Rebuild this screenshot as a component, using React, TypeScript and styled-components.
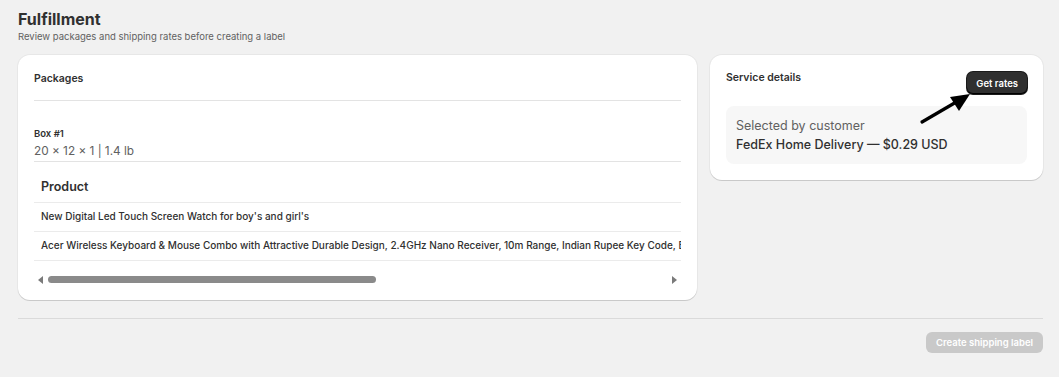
import styled, { createGlobalStyle } from "styled-components";

const GlobalStyle = createGlobalStyle`
  html, body {
    margin: 0;
    padding: 0;
    background: #f1f1f1;
    font-family: Inter, "Noto Sans", sans-serif;
    color: #303030;
  }
`;

const Page = styled.div`
  padding: 9px 16px 0 18px;
  width: 1059px;
  height: 377px;
  box-sizing: border-box;
`;

const Title = styled.h1`
  margin: 0;
  font-size: 16px;
  line-height: 20px;
  font-weight: 650;
  color: #303030;
`;

const Subtitle = styled.p`
  margin: 1px 0 0;
  font-size: 9.5px;
  line-height: 14px;
  color: #616161;
`;

const Layout = styled.div`
  display: grid;
  grid-template-columns: 679px 1fr;
  gap: 13px;
  align-items: start;
  margin-top: 11px;
`;

const Card = styled.section`
  position: relative;
  background: #fff;
  border-radius: 12px;
  box-shadow: 0 1px 0 rgba(0, 0, 0, 0.13), 0 0 0 1px rgba(0, 0, 0, 0.04);
  padding: 16px 16px 0;
`;

const CardHeading = styled.h2`
  margin: 0;
  font-size: 10.5px;
  line-height: 14px;
  font-weight: 600;
  color: #303030;
`;

const PackagesHeader = styled.div`
  padding-top: 1px;
  padding-bottom: 14px;
  border-bottom: 1px solid #e3e3e3;
`;

const BoxInfo = styled.div`
  padding-top: 26px;
  padding-bottom: 1px;
  border-bottom: 1px solid #e3e3e3;
`;

const BoxLabel = styled.div`
  margin-bottom: 2px;
  font-size: 9.5px;
  line-height: 13px;
  font-weight: 600;
  color: #303030;
`;

const BoxSize = styled.div`
  font-size: 11.8px;
  line-height: 18px;
  color: #616161;
`;

const TableScroller = styled.div`
  overflow: hidden;
`;

const Row = styled.div<{ $header?: boolean }>`
  display: flex;
  align-items: ${(p) => (p.$header ? "flex-start" : "center")};
  box-sizing: border-box;
  height: ${(p) => (p.$header ? "41px" : "29px")};
  padding: ${(p) => (p.$header ? "17px 0 0 7px" : "0 0 1px 7px")};
  border-bottom: 1px solid #ebebeb;
  white-space: nowrap;
  font-size: ${(p) => (p.$header ? "12.5px" : "10px")};
  line-height: 15px;
  font-weight: ${(p) => (p.$header ? 600 : 450)};
  color: #303030;
`;

const FakeScrollbar = styled.div`
  display: flex;
  align-items: center;
  gap: 5px;
  height: 39px;
  padding: 0 4px 2px 4px;
  box-sizing: border-box;
`;

const ScrollArrow = styled.span<{ $dir: "left" | "right" }>`
  width: 0;
  height: 0;
  border-top: 4px solid transparent;
  border-bottom: 4px solid transparent;
  ${(p) =>
    p.$dir === "left"
      ? "border-right: 5px solid #7a7a7a;"
      : "border-left: 5px solid #7a7a7a;"}
`;

const ScrollTrack = styled.div`
  flex: 1;
  display: flex;
`;

const ScrollThumb = styled.div`
  width: 328px;
  height: 7px;
  border-radius: 4px;
  background: #8a8a8a;
`;

const ServiceCard = styled(Card)`
  padding-bottom: 16px;
`;

const ServiceHeader = styled.div`
  display: flex;
  justify-content: space-between;
  align-items: flex-start;
`;

const DarkButton = styled.button`
  margin-top: 1px;
  height: 22px;
  padding: 0 9px;
  border: 0;
  border-radius: 6px;
  background: #303030;
  box-shadow: inset 0 -1px 0 #000, 0 0 0 1px #1a1a1a;
  color: #fff;
  font-family: inherit;
  font-size: 9.5px;
  font-weight: 600;
`;

const SelectedBox = styled.div`
  margin-top: 12px;
  background: #f7f7f7;
  border-radius: 8px;
  padding: 10px 10px 10px;
`;

const SelectedLabel = styled.div`
  font-size: 12.5px;
  line-height: 19px;
  color: #616161;
`;

const SelectedValue = styled.div`
  font-size: 12.5px;
  line-height: 19px;
  font-weight: 500;
  color: #303030;
`;

const ArrowMark = styled.svg`
  position: absolute;
  left: 208px;
  top: 34px;
`;

const Footer = styled.div`
  margin-top: 18px;
  border-top: 1px solid #dadada;
  display: flex;
  justify-content: flex-end;
  padding-top: 13px;
`;

const DisabledButton = styled.button`
  height: 21px;
  width: 117px;
  border: 0;
  border-radius: 6px;
  background: #c9c9c9;
  color: #fff;
  font-family: inherit;
  font-size: 9.5px;
  font-weight: 600;
`;

const products = [
  "New Digital Led Touch Screen Watch for boy's and girl's",
  "Acer Wireless Keyboard & Mouse Combo with Attractive Durable Design, 2.4GHz Nano Receiver, 10m Range, Indian Rupee Key Code, Black",
];

export default function App() {
  return (
    <Page>
      <GlobalStyle />
      <Title>Fulfillment</Title>
      <Subtitle>Review packages and shipping rates before creating a label</Subtitle>
      <Layout>
        <Card>
          <PackagesHeader>
            <CardHeading>Packages</CardHeading>
          </PackagesHeader>
          <BoxInfo>
            <BoxLabel>Box #1</BoxLabel>
            <BoxSize>20 × 12 × 1 | 1.4 lb</BoxSize>
          </BoxInfo>
          <TableScroller>
            <Row $header>Product</Row>
            {products.map((p) => (
              <Row key={p}>{p}</Row>
            ))}
          </TableScroller>
          <FakeScrollbar>
            <ScrollArrow $dir="left" />
            <ScrollTrack>
              <ScrollThumb />
            </ScrollTrack>
            <ScrollArrow $dir="right" />
          </FakeScrollbar>
        </Card>
        <ServiceCard>
          <ServiceHeader>
            <CardHeading>Service details</CardHeading>
            <DarkButton>Get rates</DarkButton>
          </ServiceHeader>
          <SelectedBox>
            <SelectedLabel>Selected by customer</SelectedLabel>
            <SelectedValue>FedEx Home Delivery — $0.29 USD</SelectedValue>
          </SelectedBox>
          <ArrowMark width="60" height="38" viewBox="0 0 60 38">
            <line x1="4" y1="33" x2="40" y2="12" stroke="#000" strokeWidth="3.2" strokeLinecap="round" />
            <polygon points="52,5 41,22 32,8" fill="#000" />
          </ArrowMark>
        </ServiceCard>
      </Layout>
      <Footer>
        <DisabledButton>Create shipping label</DisabledButton>
      </Footer>
    </Page>
  );
}
